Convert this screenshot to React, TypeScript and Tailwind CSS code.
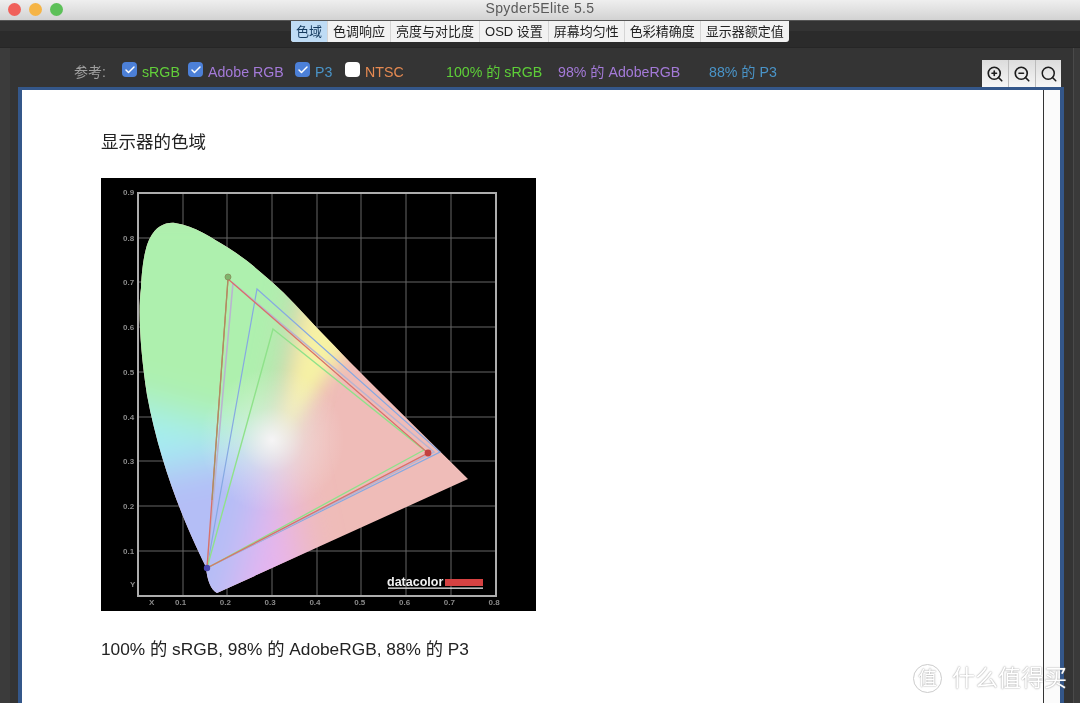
import { Check, Search, ZoomIn, ZoomOut } from "lucide-react";

const tabs = ["色调响应", "亮度与对比度", "OSD 设置", "屏幕均匀性", "色彩精确度", "显示器额定值"];

const gamut =
  "M217 593 C211 590 207 580 206 567 C185 525 160 465 147 395 C140 350 138 310 141 288 C142 262 146 245 150 238 C156 226 166 222 175 223 C195 226 212 238 227 247 C245 258 258 270 272 282 C288 296 302 312 317 328 C340 352 360 372 383 395 L468 479 L217 593 Z";

function Chart() {
  const xs = [183, 227, 272, 317, 361, 406, 451];
  const ys = [238, 282, 327, 372, 417, 461, 506, 551];
  const yLabels = ["0.8", "0.7", "0.6", "0.5", "0.4", "0.3", "0.2", "0.1"];
  const xLabels = ["0.1", "0.2", "0.3", "0.4", "0.5", "0.6", "0.7", "0.8"];
  return (
    <svg viewBox="101 178 435 433" className="w-[435px] h-[433px] block">
      <defs>
        <clipPath id="gamutClip">
          <path d={gamut} />
        </clipPath>
        <filter id="fan" x="-20%" y="-20%" width="140%" height="140%">
          <feGaussianBlur stdDeviation="20" />
        </filter>
        <filter id="yellow" x="-30%" y="-30%" width="160%" height="160%">
          <feGaussianBlur stdDeviation="9" />
        </filter>
        <radialGradient id="whitePoint">
          <stop offset="0%" stopColor="#f8f6f8" stopOpacity="0.95" />
          <stop offset="45%" stopColor="#f4f4f4" stopOpacity="0.35" />
          <stop offset="100%" stopColor="#f4f4f4" stopOpacity="0" />
        </radialGradient>
      </defs>
      <rect x="101" y="178" width="435" height="433" fill="#000" />
      {xs.map((x) => (
        <line key={x} x1={x} y1="193" x2={x} y2="596" stroke="#666" strokeWidth="1" />
      ))}
      {ys.map((y) => (
        <line key={y} x1="138" y1={y} x2="496" y2={y} stroke="#666" strokeWidth="1" />
      ))}
      <rect x="138" y="193" width="358" height="403" fill="none" stroke="#adadad" strokeWidth="2" />
      <g clipPath="url(#gamutClip)">
        <rect x="130" y="200" width="360" height="410" fill="#efbcb8" />
        <g filter="url(#fan)">
          <polygon points="278,443 318,233 350,190 60,190 60,385" fill="#aef0ae" />
          <polygon points="278,443 60,385 60,490" fill="#a4eef2" />
          <polygon points="278,443 60,490 60,640 225,640" fill="#b4bef6" />
          <polygon points="278,443 225,640 318,640" fill="#e8b4f0" />
        </g>
        <polygon points="278,443 434,233 318,233" fill="#f6f2a4" filter="url(#yellow)" />
        <circle cx="272" cy="440" r="72" fill="url(#whitePoint)" />
      </g>
      <polygon points="257,289 440,452 207,568" fill="none" stroke="#86a9e2" strokeWidth="1.2" />
      <polygon points="233,283 434,452 207,568" fill="none" stroke="#b9b4d0" strokeWidth="1.6" />
      <polygon points="273,329 424,450 207,568" fill="none" stroke="#8fe28a" strokeWidth="1.4" />
      <polygon points="228,279 428,453 207,568" fill="none" stroke="#d9706a" strokeWidth="1.3" />
      <line x1="228" y1="279" x2="212" y2="500" stroke="#a8925f" strokeWidth="1.2" />
      <circle cx="228" cy="277" r="3" fill="#7fb56c" stroke="#8a8a5a" strokeWidth="0.8" />
      <circle cx="428" cy="453" r="3.4" fill="#c2403f" />
      <circle cx="207" cy="568" r="3.2" fill="#4a48b0" />
      <g fill="#8a8a8a" fontFamily="'Liberation Sans', sans-serif" fontSize="8" fontWeight="700">
        <text x="123" y="195">0.9</text>
        {yLabels.map((label, i) => (
          <text key={label} x="123" y={ys[i] + 3}>
            {label}
          </text>
        ))}
        <text x="130" y="587">Y</text>
        <text x="149" y="605">X</text>
        {xLabels.map((label, i) => (
          <text key={label} x={175 + i * 44.8} y="605">
            {label}
          </text>
        ))}
      </g>
      <text x="387" y="586" fill="#f2f2f2" fontFamily="'Liberation Sans', sans-serif" fontSize="12.5" fontWeight="700">
        datacolor
      </text>
      <rect x="445" y="579" width="38" height="7" fill="#d64242" />
      <rect x="388" y="587.5" width="95" height="1.3" fill="#e8e8e8" />
    </svg>
  );
}

function Box({ checked }: { checked: boolean }) {
  return (
    <span
      className={
        checked
          ? "w-[15px] h-[15px] rounded-[4px] bg-[#4c80d8] flex items-center justify-center"
          : "w-[15px] h-[15px] rounded-[4px] bg-white"
      }
    >
      {checked && <Check size={12} strokeWidth={3} className="text-white" />}
    </span>
  );
}

export default function App() {
  return (
    <div className="relative w-[1080px] h-[703px] overflow-hidden flex flex-col bg-[#343434] blur-[0.5px] font-['Liberation_Sans','Noto_Sans_CJK_SC',sans-serif]">
      <div className="h-[21px] shrink-0 relative flex items-center justify-center bg-gradient-to-b from-[#efefef] to-[#d2d2d2] border-b border-[#555]">
        <div className="absolute left-[8px] top-[3px] flex gap-[8px]">
          <span className="w-[13px] h-[13px] rounded-full bg-[#f0605a]" />
          <span className="w-[13px] h-[13px] rounded-full bg-[#f5b445]" />
          <span className="w-[13px] h-[13px] rounded-full bg-[#5cc058]" />
        </div>
        <span className="text-[14px] tracking-[0.4px] text-[#5a5a5a] mt-[-3px]">Spyder5Elite 5.5</span>
      </div>

      <div className="h-[27px] shrink-0 bg-gradient-to-b from-[#333333] from-40% to-[#2b2b2b] to-40% border-b border-[#262626] pl-[291px]">
        <div className="flex h-[21px] text-[13px] leading-[21px] text-[#222] bg-[#f2f2f2] w-fit rounded-b-[3px] overflow-hidden">
          <span className="w-[36px] text-center bg-[#bfdcf5] text-[#143a5e]">色域</span>
          {tabs.map((tab) => (
            <span key={tab} className="px-[5px] border-l border-[#d5d5d5] whitespace-nowrap">
              {tab}
            </span>
          ))}
        </div>
      </div>

      <div className="flex-1 min-h-0 flex">
        <div className="w-[10px] bg-[#3b3b3b]" />
        <div className="flex-1 min-w-0 flex flex-col">
          <div className="h-[39px] shrink-0 flex pl-[64px] pr-[3px] text-[14.2px] pt-[14px]">
            <span className="text-[#a0a0a0] w-[48px] text-[14px]">参考:</span>
            <div className="flex items-start gap-[5px] w-[66px]">
              <Box checked />
              <span className="text-[#62cf3a]">sRGB</span>
            </div>
            <div className="flex items-start gap-[5px] w-[107px]">
              <Box checked />
              <span className="text-[#a47ad8]">Adobe RGB</span>
            </div>
            <div className="flex items-start gap-[5px] w-[50px]">
              <Box checked />
              <span className="text-[#4a94c8]">P3</span>
            </div>
            <div className="flex items-start gap-[5px] w-[101px]">
              <Box checked={false} />
              <span className="text-[#e68a52]">NTSC</span>
            </div>
            <span className="text-[#5ecf38] w-[112px]">100% 的 sRGB</span>
            <span className="text-[#a47ad8] w-[151px]">98% 的 AdobeRGB</span>
            <span className="text-[#4a94c8]">88% 的 P3</span>
            <div className="ml-auto flex h-[27px] mt-[-2px] relative z-10 bg-gradient-to-b from-[#dcdcdc] to-[#f6f6f6] text-[#1c1c1c]">
              <span className="w-[26px] flex items-center justify-center">
                <ZoomIn size={18} strokeWidth={2.2} />
              </span>
              <span className="w-[27px] flex items-center justify-center border-l border-[#bbb]">
                <ZoomOut size={18} strokeWidth={2.2} />
              </span>
              <span className="w-[26px] flex items-center justify-center border-l border-[#bbb]">
                <Search size={18} strokeWidth={2} />
              </span>
            </div>
          </div>
          <div className="flex-1 min-h-0 ml-[8px] border-l-[4px] border-r-[4px] border-t-[3px] border-[#34578a] bg-white flex">
            <div className="flex-1 min-w-0 pl-[79px] pt-[39px]">
              <p className="text-[17.5px] leading-[26px] text-[#222]">显示器的色域</p>
              <div className="mt-[23px]">
                <Chart />
              </div>
              <p className="mt-[25px] text-[17.3px] leading-[26px] text-[#222]">100% 的 sRGB, 98% 的 AdobeRGB, 88% 的 P3</p>
            </div>
            <div className="w-[17px] shrink-0 border-l border-[#333] bg-[#fbfbfb]" />
          </div>
        </div>
        <div className="w-[7px] ml-[9px] border-l border-[#4a4a4a] bg-[#3a3a3a]" />
      </div>

      <div className="absolute left-[913px] top-[664px] flex items-center gap-[10px] text-white [text-shadow:0_0_1.5px_#777]">
        <span className="w-[29px] h-[29px] rounded-full border border-[#ccc] flex items-center justify-center text-[19px] leading-none text-white">
          值
        </span>
        <span className="text-[23px] leading-none whitespace-nowrap">什么值得买</span>
      </div>
    </div>
  );
}
